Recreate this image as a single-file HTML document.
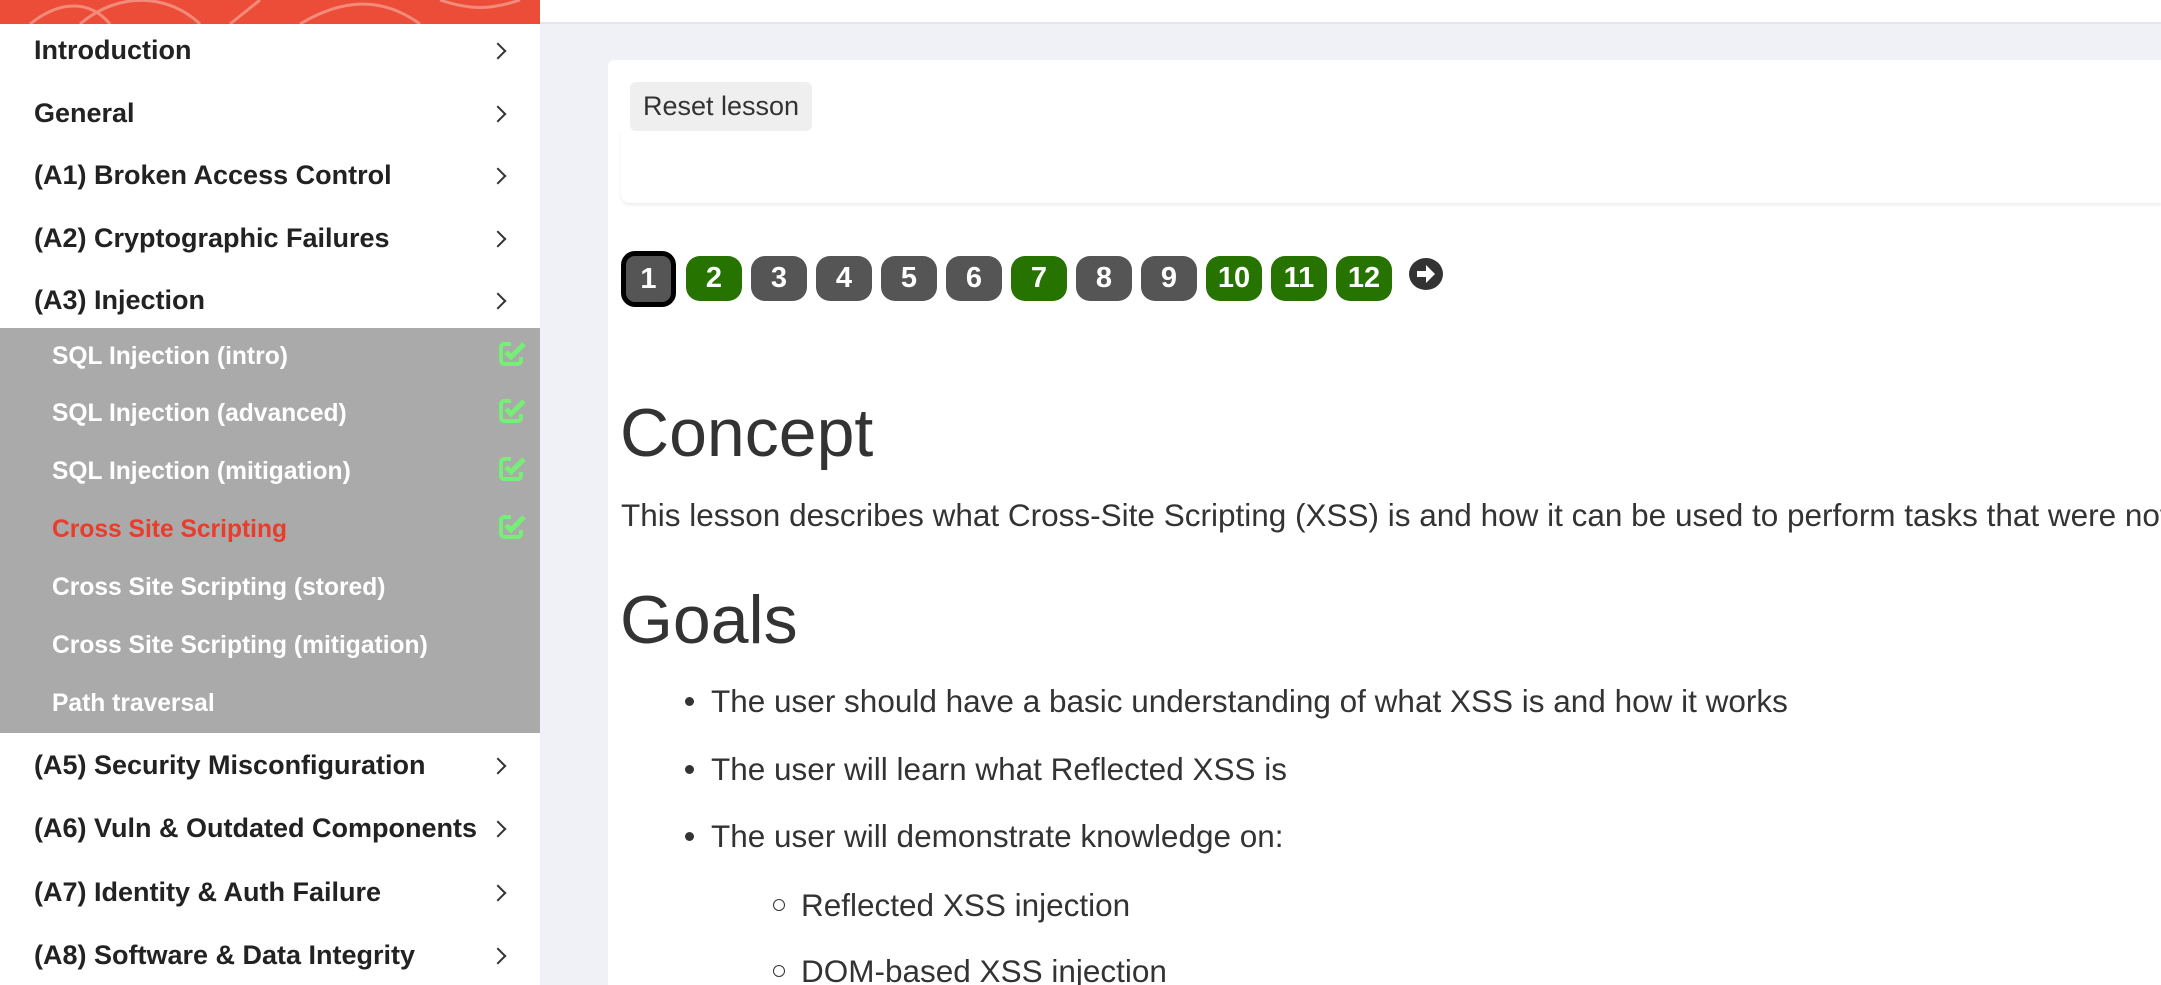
<!DOCTYPE html>
<html><head><meta charset="utf-8"><style>
*{margin:0;padding:0;box-sizing:border-box}
html,body{width:2161px;height:985px;overflow:hidden}
body{font-family:"Liberation Sans",Arial,sans-serif;background:#f0f1f6;position:relative;color:#333}
#hdr{position:absolute;left:0;top:0;width:540px;height:24px;background:#ec4d38;overflow:hidden}
#top{position:absolute;left:540px;top:0;right:0;height:24px;background:#fff;border-bottom:2px solid #e4e4ea}
#side{position:absolute;left:0;top:24px;width:540px;height:961px;background:#fff}
.it{position:absolute;left:34px;font-size:27px;font-weight:bold;color:#222;line-height:30px;white-space:nowrap}
.chev{position:absolute;left:492px;width:12px;height:12px;border-right:2px solid #333;border-top:2px solid #333;transform:rotate(45deg)}
#gray{position:absolute;left:0;top:328px;width:540px;height:405px;background:#aaa}
.sub{position:absolute;left:52px;font-size:24.6px;font-weight:bold;color:#fff;line-height:26px;white-space:nowrap}
.chk{position:absolute;left:497px}
#card{position:absolute;left:608px;top:60px;width:1553px;height:925px;background:#fff;border-radius:6px 0 0 0}
#btn{position:absolute;left:630px;top:82px;width:182px;height:49px;background:#efefef;border-radius:6px;font-size:27px;line-height:49px;text-align:center;color:#333}
#box{position:absolute;left:621px;top:131px;width:1540px;height:72px;border-radius:0 0 0 8px;box-shadow:0 2px 3px rgba(0,0,0,.08)}
.pg{position:absolute;top:256px;width:56px;height:45px;border-radius:14px;color:#fff;font-weight:bold;font-size:29px;line-height:45px;text-align:center;background:#555}
.g{background:#267300}
h1{position:absolute;left:620px;font-weight:normal;font-size:68px;color:#333;line-height:80px}
p{position:absolute;left:621px;top:497px;font-size:31.5px;white-space:nowrap;line-height:36px;width:1540px;overflow:hidden}
.li{position:absolute;font-size:31.5px;white-space:nowrap;line-height:36px}
.dot{position:absolute;width:9px;height:9px;border-radius:50%;background:#333}
.circ{position:absolute;width:12px;height:12px;border-radius:50%;border:1.5px solid #333}
</style></head><body>
<div id="hdr"><svg width="540" height="24"><g fill="none" stroke="#f38a7a" stroke-width="3"><path d="M30 24 C60 0 90 0 110 24"/><path d="M80 24 C120 -10 170 -5 200 24"/><path d="M230 24 L260 0"/><path d="M300 24 C340 0 380 -5 420 24"/><path d="M440 0 C470 10 490 10 520 0"/></g></svg></div>
<div id="top"></div>
<div id="side"></div>
<div class="it" style="top:35px">Introduction</div><div class="chev" style="top:45px"></div>
<div class="it" style="top:98px">General</div><div class="chev" style="top:108px"></div>
<div class="it" style="top:160px">(A1) Broken Access Control</div><div class="chev" style="top:170px"></div>
<div class="it" style="top:223px">(A2) Cryptographic Failures</div><div class="chev" style="top:233px"></div>
<div class="it" style="top:285px">(A3) Injection</div><div class="chev" style="top:295px"></div>
<div id="gray"></div>
<div class="sub" style="top:344px">SQL Injection (intro)</div>
<div class="sub" style="top:401px">SQL Injection (advanced)</div>
<div class="sub" style="top:459px">SQL Injection (mitigation)</div>
<div class="sub" style="top:517px;color:#e93c2b">Cross Site Scripting</div>
<div class="sub" style="top:575px">Cross Site Scripting (stored)</div>
<div class="sub" style="top:633px">Cross Site Scripting (mitigation)</div>
<div class="sub" style="top:691px">Path traversal</div>
<svg class="chk" style="top:340px" width="32" height="28" viewBox="0 0 32 28"><path d="M14 4H7a3 3 0 0 0-3 3v14a3 3 0 0 0 3 3h14a3 3 0 0 0 3-3v-4" fill="none" stroke="#77ee77" stroke-width="4"/><path d="M9 12l5 5 13-13" fill="none" stroke="#77ee77" stroke-width="5"/></svg>
<svg class="chk" style="top:397px" width="32" height="28" viewBox="0 0 32 28"><path d="M14 4H7a3 3 0 0 0-3 3v14a3 3 0 0 0 3 3h14a3 3 0 0 0 3-3v-4" fill="none" stroke="#77ee77" stroke-width="4"/><path d="M9 12l5 5 13-13" fill="none" stroke="#77ee77" stroke-width="5"/></svg>
<svg class="chk" style="top:455px" width="32" height="28" viewBox="0 0 32 28"><path d="M14 4H7a3 3 0 0 0-3 3v14a3 3 0 0 0 3 3h14a3 3 0 0 0 3-3v-4" fill="none" stroke="#77ee77" stroke-width="4"/><path d="M9 12l5 5 13-13" fill="none" stroke="#77ee77" stroke-width="5"/></svg>
<svg class="chk" style="top:513px" width="32" height="28" viewBox="0 0 32 28"><path d="M14 4H7a3 3 0 0 0-3 3v14a3 3 0 0 0 3 3h14a3 3 0 0 0 3-3v-4" fill="none" stroke="#77ee77" stroke-width="4"/><path d="M9 12l5 5 13-13" fill="none" stroke="#77ee77" stroke-width="5"/></svg>
<div class="it" style="top:750px">(A5) Security Misconfiguration</div><div class="chev" style="top:760px"></div>
<div class="it" style="top:813px">(A6) Vuln &amp; Outdated Components</div><div class="chev" style="top:823px"></div>
<div class="it" style="top:877px">(A7) Identity &amp; Auth Failure</div><div class="chev" style="top:887px"></div>
<div class="it" style="top:940px">(A8) Software &amp; Data Integrity</div><div class="chev" style="top:950px"></div>
<div id="card"></div>
<div id="box"></div>
<div id="btn">Reset lesson</div>
<div class="pg" style="left:621px;top:251px;width:55px;height:56px;border:5px solid #000;line-height:46px">1</div>
<div class="pg g" style="left:686px">2</div>
<div class="pg" style="left:751px">3</div>
<div class="pg" style="left:816px">4</div>
<div class="pg" style="left:881px">5</div>
<div class="pg" style="left:946px">6</div>
<div class="pg g" style="left:1011px">7</div>
<div class="pg" style="left:1076px">8</div>
<div class="pg" style="left:1141px">9</div>
<div class="pg g" style="left:1206px">10</div>
<div class="pg g" style="left:1271px">11</div>
<div class="pg g" style="left:1336px">12</div>
<svg style="position:absolute;left:1408px;top:257px" width="36" height="34" viewBox="0 0 36 34"><ellipse cx="18" cy="17" rx="17" ry="16" fill="#333"/><path d="M9 14h9v-6l9 9-9 9v-6H9z" fill="#fff"/></svg>
<h1 style="top:393px">Concept</h1>
<p>This lesson describes what Cross-Site Scripting (XSS) is and how it can be used to perform tasks that were not the original intent of the developer.</p>
<h1 style="top:580px">Goals</h1>
<div class="dot" style="left:685px;top:697px"></div><div class="li" style="left:711px;top:683px">The user should have a basic understanding of what XSS is and how it works</div>
<div class="dot" style="left:685px;top:765px"></div><div class="li" style="left:711px;top:751px">The user will learn what Reflected XSS is</div>
<div class="dot" style="left:685px;top:832px"></div><div class="li" style="left:711px;top:818px">The user will demonstrate knowledge on:</div>
<div class="circ" style="left:773px;top:899px"></div><div class="li" style="left:801px;top:887px">Reflected XSS injection</div>
<div class="circ" style="left:773px;top:965px"></div><div class="li" style="left:801px;top:953px">DOM-based XSS injection</div>
</body></html>
